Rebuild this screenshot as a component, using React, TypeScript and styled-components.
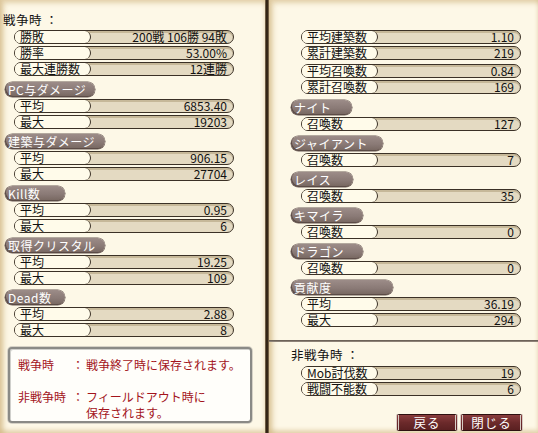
import React from "react";
import styled, { createGlobalStyle } from "styled-components";

const GlobalStyle = createGlobalStyle`
  html, body {
    margin: 0;
    padding: 0;
    background: #fcf6e2;
  }
  body {
    font-family: "Noto Sans CJK JP", "Liberation Sans", sans-serif;
    font-size: 12px;
    color: #111;
  }
`;

const Window = styled.div`
  width: 538px;
  height: 433px;
  display: flex;
  overflow: hidden;
  background: #fcf6e2;
`;

const Panel = styled.div<{ $width: number }>`
  width: ${(p) => p.$width}px;
  height: 433px;
  display: flex;
  flex-direction: column;
  background: #fdf8e7;
  box-shadow: inset 4px 3px 5px rgba(196, 160, 96, 0.45),
    inset 0 -3px 4px rgba(196, 160, 96, 0.4);
`;

const Divider = styled.div`
  width: 4px;
  height: 433px;
  background: linear-gradient(90deg, #8a7658 0%, #2c1f12 40%, #3a2a18 70%, #9a8462 100%);
`;

const Section = styled.div<{ $height?: number; $pad: number }>`
  display: flex;
  flex-direction: column;
  padding-top: ${(p) => p.$pad}px;
  ${(p) => (p.$height ? `height: ${p.$height}px; flex: none;` : "flex: 1;")}
  box-sizing: border-box;
`;

const HRule = styled.div`
  height: 2px;
  background: linear-gradient(180deg, #5c5249 0%, #9d9286 100%);
`;

const Title = styled.div<{ $indent: number; $mb: number }>`
  margin-left: ${(p) => p.$indent}px;
  margin-bottom: ${(p) => p.$mb}px;
  height: 14px;
  line-height: 14px;
  font-size: 12.5px;
  color: #111;
  letter-spacing: 0.5px;
`;

const Stack = styled.div<{ $mb: number }>`
  display: flex;
  flex-direction: column;
  gap: 2px;
  margin-bottom: ${(p) => p.$mb}px;
`;

const Header = styled.div<{ $indent: number; $width: number }>`
  margin-left: ${(p) => p.$indent}px;
  width: ${(p) => p.$width}px;
  height: 15px;
  box-sizing: border-box;
  border-radius: 8px;
  background: linear-gradient(180deg, #9c8c88 0%, #8a7a76 55%, #76665f 100%);
  box-shadow: inset 1px -1px 0 #5b4b46, 0 0 0 0.5px #6b5b56;
  color: #fff;
  font-size: 12px;
  line-height: 15px;
  padding-left: 3px;
  letter-spacing: 0.5px;
  white-space: nowrap;
`;

const Row = styled.div<{ $indent: number }>`
  margin-left: ${(p) => p.$indent}px;
  width: 220px;
  height: 14px;
  box-sizing: border-box;
  display: flex;
  align-items: center;
  border: 1px solid #3b3126;
  border-radius: 7px;
  background: #e4dac2;
  box-shadow: inset 0 2px 0 #c6b899;
`;

const Label = styled.div`
  flex: none;
  width: 76px;
  height: 12px;
  box-sizing: border-box;
  background: #fffbea;
  border-right: 1.5px solid #3b3126;
  border-radius: 6px 7px 7px 6px;
  padding-left: 5px;
  line-height: 12px;
  font-size: 12px;
  color: #111;
  white-space: nowrap;
`;

const Value = styled.div`
  flex: 1;
  text-align: right;
  padding-right: 6px;
  font-size: 12px;
  line-height: 12px;
  color: #111;
  white-space: nowrap;
`;

const NoteBox = styled.div`
  margin: 0 13px 0 8px;
  height: 76px;
  box-sizing: border-box;
  border: 2px solid #8a8a86;
  border-radius: 4px;
  background: #fffefa;
  box-shadow: inset 1px 1px 0 #d0d0cc, 0 0 0 1px #d6d2c6;
  padding: 8px 0 0 8px;
  display: grid;
  grid-template-columns: 54px 14px 1fr;
  grid-auto-rows: 16px;
  color: #a3141c;
  font-size: 12px;
  line-height: 16px;
`;

const Gap = styled.div`
  grid-column: 1 / 4;
  height: 12px;
`;

const ButtonBar = styled.div`
  display: flex;
  justify-content: flex-end;
  gap: 2px;
  padding-right: 15px;
  margin-top: 18px;
`;

const Button = styled.button<{ $width: number }>`
  width: ${(p) => p.$width}px;
  height: 17px;
  padding: 0;
  box-sizing: border-box;
  border: 1px solid #2e1010;
  border-left: 3px double #d8ccc4;
  border-right: 3px double #d8ccc4;
  border-radius: 2px;
  background: linear-gradient(180deg, #8a3d3d 0%, #6c2a2b 50%, #5a2021 100%);
  color: #fff;
  font-family: "Noto Sans CJK JP", sans-serif;
  font-size: 12.5px;
  line-height: 14px;
  letter-spacing: 1px;
`;

type Item = [string, string];

const StatRows = ({ items, indent, mb }: { items: Item[]; indent: number; mb: number }) => (
  <Stack $mb={mb}>
    {items.map(([k, v], i) => (
      <Row key={i} $indent={indent}>
        <Label>{k}</Label>
        <Value>{v}</Value>
      </Row>
    ))}
  </Stack>
);

const Group = ({
  title,
  width,
  items,
  hIndent,
  rIndent,
}: {
  title: string;
  width: number;
  items: Item[];
  hIndent: number;
  rIndent: number;
}) => (
  <Stack $mb={5}>
    <Header $indent={hIndent} $width={width}>
      {title}
    </Header>
    {items.map(([k, v], i) => (
      <Row key={i} $indent={rIndent}>
        <Label>{k}</Label>
        <Value>{v}</Value>
      </Row>
    ))}
  </Stack>
);

const leftGroups: { title: string; width: number; items: Item[] }[] = [
  { title: "PC与ダメージ", width: 90, items: [["平均", "6853.40"], ["最大", "19203"]] },
  { title: "建築与ダメージ", width: 100, items: [["平均", "906.15"], ["最大", "27704"]] },
  { title: "Kill数", width: 60, items: [["平均", "0.95"], ["最大", "6"]] },
  { title: "取得クリスタル", width: 100, items: [["平均", "19.25"], ["最大", "109"]] },
  { title: "Dead数", width: 60, items: [["平均", "2.88"], ["最大", "8"]] },
];

const rightGroups: { title: string; width: number; items: Item[] }[] = [
  { title: "ナイト", width: 61, items: [["召喚数", "127"]] },
  { title: "ジャイアント", width: 92, items: [["召喚数", "7"]] },
  { title: "レイス", width: 62, items: [["召喚数", "35"]] },
  { title: "キマイラ", width: 72, items: [["召喚数", "0"]] },
  { title: "ドラゴン", width: 72, items: [["召喚数", "0"]] },
  { title: "貢献度", width: 102, items: [["平均", "36.19"], ["最大", "294"]] },
];

export default function App() {
  return (
    <>
      <GlobalStyle />
      <Window>
        <Panel $width={265}>
          <Section $pad={13}>
            <Title $indent={3} $mb={3}>
              戦争時 ：
            </Title>
            <StatRows
              indent={14}
              mb={6}
              items={[
                ["勝敗", "200戦 106勝 94敗"],
                ["勝率", "53.00%"],
                ["最大連勝数", "12連勝"],
              ]}
            />
            {leftGroups.map((g) => (
              <Group key={g.title} {...g} hIndent={5} rIndent={14} />
            ))}
            <div style={{ height: 5 }} />
            <NoteBox>
              <span>戦争時</span>
              <span>：</span>
              <span>戦争終了時に保存されます。</span>
              <Gap />
              <span>非戦争時</span>
              <span>：</span>
              <span>フィールドアウト時に</span>
              <span />
              <span />
              <span>保存されます。</span>
            </NoteBox>
          </Section>
        </Panel>
        <Divider />
        <Panel $width={269}>
          <Section $height={340} $pad={30}>
            <StatRows
              indent={32}
              mb={4}
              items={[
                ["平均建築数", "1.10"],
                ["累計建築数", "219"],
              ]}
            />
            <StatRows
              indent={32}
              mb={6}
              items={[
                ["平均召喚数", "0.84"],
                ["累計召喚数", "169"],
              ]}
            />
            {rightGroups.map((g) => (
              <Group key={g.title} {...g} hIndent={22} rIndent={32} />
            ))}
          </Section>
          <HRule />
          <Section $pad={6}>
            <Title $indent={22} $mb={4}>
              非戦争時 ：
            </Title>
            <StatRows
              indent={32}
              mb={0}
              items={[
                ["Mob討伐数", "19"],
                ["戦闘不能数", "6"],
              ]}
            />
            <ButtonBar>
              <Button $width={62}>戻る</Button>
              <Button $width={63}>閉じる</Button>
            </ButtonBar>
          </Section>
        </Panel>
      </Window>
    </>
  );
}
